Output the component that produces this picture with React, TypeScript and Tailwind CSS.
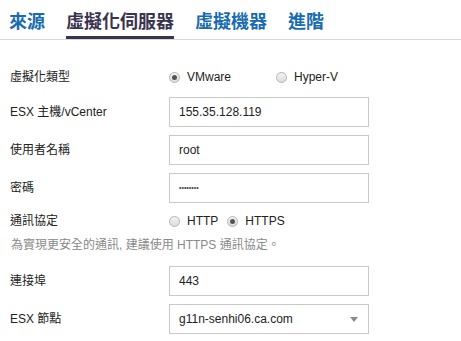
import React from "react";

const font = { fontFamily: '"Liberation Sans Narrow", "Liberation Sans", "Noto Sans CJK TC", sans-serif' };

function Radio({ checked, label }: { checked?: boolean; label: string }) {
  return (
    <span className="flex items-center gap-[7px]">
      <span className="flex h-[11px] w-[11px] items-center justify-center rounded-full border border-[#b4b4b4] bg-gradient-to-b from-[#f4f4f4] to-[#dcdcdc]">
        {checked && <span className="h-[5px] w-[5px] rounded-full bg-[#555]" />}
      </span>
      <span>{label}</span>
    </span>
  );
}

function Field({ children }: { children: React.ReactNode }) {
  return (
    <div className="flex h-[30px] w-[200px] items-center border border-[#c9c9c9] bg-white px-[9px]">
      {children}
    </div>
  );
}

function Row({ label, className, children }: { label: string; className?: string; children: React.ReactNode }) {
  return (
    <div className={"flex h-[30px] items-center " + (className ?? "")}>
      <div className="w-[169px] pl-[10px]">{label}</div>
      {children}
    </div>
  );
}

export default function App() {
  const tabs = ["來源", "虛擬化伺服器", "虛擬機器", "進階"];
  return (
    <div className="h-[341px] w-[461px] bg-white text-[12px] text-[#222]" style={font}>
      <nav className="flex gap-[21px] border-b border-[#d8d8de] pl-[9px]">
        {tabs.map((t, i) => (
          <div
            key={t}
            className={
              i === 1
                ? "h-[39px] border-b-[3px] border-[#3a3350] pt-[8px] text-[18px] font-bold leading-[24px] text-[#3a3350]"
                : "h-[39px] pt-[8px] text-[18px] font-bold leading-[24px] text-[#176bb0]"
            }
            style={{ fontFamily: '"Noto Sans CJK TC", sans-serif' }}
          >
            {t}
          </div>
        ))}
      </nav>

      <div className="flex flex-col pt-[22px]">
        <Row label="虛擬化類型">
          <div className="flex gap-[45px]">
            <Radio checked label="VMware" />
            <Radio label="Hyper-V" />
          </div>
        </Row>
        <Row label="ESX 主機/vCenter" className="mt-[5px]">
          <Field>155.35.128.119</Field>
        </Row>
        <Row label="使用者名稱" className="mt-[8px]">
          <Field>root</Field>
        </Row>
        <Row label="密碼" className="mt-[8px]">
          <Field>
            <span className="text-[7px] text-[#444]">••••••••</span>
          </Field>
        </Row>
        <Row label="通訊協定" className="mt-[3px]">
          <div className="flex gap-[9px]">
            <Radio label="HTTP" />
            <Radio checked label="HTTPS" />
          </div>
        </Row>
        <p className="mt-[2px] pl-[11px] leading-[14px] text-[#8a8a8a]">為實現更安全的通訊, 建議使用 HTTPS 通訊協定。</p>
        <Row label="連接埠" className="mt-[14px]">
          <Field>443</Field>
        </Row>
        <Row label="ESX 節點" className="mt-[8px]">
          <Field>
            <span className="flex-1">g11n-senhi06.ca.com</span>
            <svg width="8" height="5" viewBox="0 0 8 5" className="mr-[1px]">
              <path d="M0 0h8L4 5z" fill="#8a8a8a" />
            </svg>
          </Field>
        </Row>
      </div>
    </div>
  );
}
